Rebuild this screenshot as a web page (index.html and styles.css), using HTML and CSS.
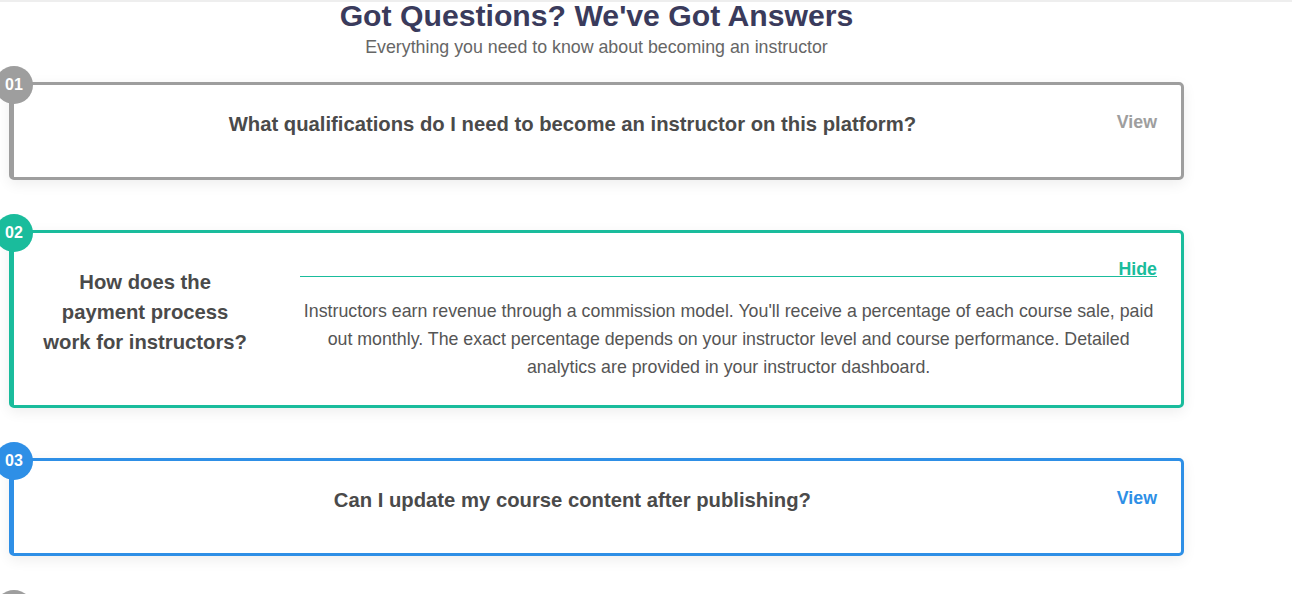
FILE: index.html
```html
<!DOCTYPE html>
<html lang="en">
<head>
<meta charset="utf-8">
<title>FAQ</title>
<link rel="stylesheet" href="styles.css">
</head>
<body>
<main class="faq">
  <header class="faq-header">
    <h2 class="faq-title">Got Questions? We've Got Answers</h2>
    <p class="faq-subtitle">Everything you need to know about becoming an instructor</p>
  </header>
  <div class="faq-list">
    <article class="faq-card faq-card--gray faq-card--collapsed">
      <span class="faq-badge">01</span>
      <h3 class="faq-question">What qualifications do I need to become an instructor on this platform?</h3>
      <button class="faq-toggle">View</button>
    </article>
    <article class="faq-card faq-card--teal faq-card--open">
      <span class="faq-badge">02</span>
      <h3 class="faq-question">How does the payment process work for instructors?</h3>
      <div class="faq-body">
        <div class="faq-body-head"><button class="faq-toggle">Hide</button></div>
        <p class="faq-answer">Instructors earn revenue through a commission model. You'll receive a percentage of each course sale, paid out monthly. The exact percentage depends on your instructor level and course performance. Detailed analytics are provided in your instructor dashboard.</p>
      </div>
    </article>
    <article class="faq-card faq-card--blue faq-card--collapsed">
      <span class="faq-badge">03</span>
      <h3 class="faq-question">Can I update my course content after publishing?</h3>
      <button class="faq-toggle">View</button>
    </article>
    <article class="faq-card faq-card--gray faq-card--collapsed">
      <span class="faq-badge">04</span>
      <h3 class="faq-question">How long does it take for my course to be approved?</h3>
      <button class="faq-toggle">View</button>
    </article>
  </div>
</main>
</body>
</html>
```
FILE: styles.css
```css
html, body {
  margin: 0;
  padding: 0;
}

body {
  background: #ffffff;
  border-top: 2px solid #eeeeee;
  font-family: "Liberation Sans", Arial, Helvetica, sans-serif;
  color: #4a4a4a;
}

.faq {
  width: 1175px;
  padding-left: 9px;
  padding-bottom: 40px;
}

.faq-header {
  text-align: center;
  margin-bottom: 25px;
}

.faq-title {
  margin: -1px 0 0;
  font-size: 30.2px;
  line-height: 30px;
  font-weight: 700;
  color: #3a3b5c;
}

.faq-subtitle {
  margin: 6px 0 0;
  font-size: 17.8px;
  line-height: 20px;
  color: #666666;
}

.faq-list {
  display: flex;
  flex-direction: column;
  gap: 50px;
}

.faq-card {
  position: relative;
  display: flex;
  align-items: flex-start;
  gap: 10px;
  background: #ffffff;
  border: 3px solid #9e9e9e;
  border-left-width: 5px;
  border-radius: 5px;
  padding: 24px;
  box-shadow: 0 4px 14px rgba(0, 0, 0, 0.07);
}

.faq-badge {
  position: absolute;
  left: -19px;
  top: -19px;
  width: 38px;
  height: 38px;
  border-radius: 50%;
  background: #9e9e9e;
  color: #ffffff;
  font-size: 16px;
  font-weight: 700;
  display: flex;
  align-items: center;
  justify-content: center;
}

.faq-question {
  flex: 1;
  margin: 0;
  font-size: 20.25px;
  line-height: 30px;
  font-weight: 700;
  text-align: center;
  color: #4a4a4a;
}

.faq-card--collapsed .faq-question {
  margin-bottom: 14px;
}

.faq-toggle {
  margin: 5px 0 0;
  padding: 0;
  border: 0;
  background: none;
  font-family: inherit;
  font-size: 17.8px;
  line-height: 16px;
  font-weight: 700;
  color: #9e9e9e;
  cursor: pointer;
}

/* accent colours */
.faq-card--gray { border-color: #9e9e9e; }
.faq-card--gray .faq-badge { background: #9e9e9e; }
.faq-card--gray .faq-toggle { color: #9e9e9e; }

.faq-card--teal { border-color: #1abc9c; }
.faq-card--teal .faq-badge { background: #1abc9c; }
.faq-card--teal .faq-toggle { color: #1abc9c; }

.faq-card--blue { border-color: #2e8fe6; }
.faq-card--blue .faq-badge { background: #2e8fe6; }
.faq-card--blue .faq-toggle { color: #2e8fe6; }

/* open card */
.faq-card--open {
  gap: 48px;
}

.faq-card--open .faq-question {
  margin-top: 10px;
}

.faq-body {
  flex: 4;
}

.faq-body-head {
  text-align: right;
  border-bottom: 1px solid #1abc9c;
}

.faq-body-head .faq-toggle {
  margin-top: 6px;
  line-height: 13px;
  display: block;
  margin-left: auto;
}

.faq-answer {
  margin: 20px 0 0;
  font-size: 17.8px;
  line-height: 28px;
  text-align: center;
  color: #555555;
}
```
